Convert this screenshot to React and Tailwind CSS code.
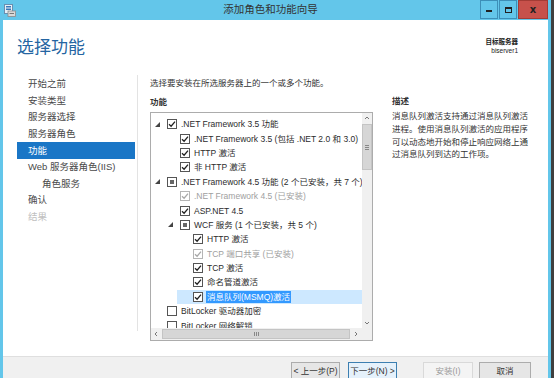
import React from 'react'

const rows = [
  { lv: 0, exp: true, st: 'on', t: '.NET Framework 3.5 功能' },
  { lv: 1, st: 'on', t: '.NET Framework 3.5 (包括 .NET 2.0 和 3.0)' },
  { lv: 1, st: 'on', t: 'HTTP 激活' },
  { lv: 1, st: 'on', t: '非 HTTP 激活' },
  { lv: 0, exp: true, st: 'part', t: '.NET Framework 4.5 功能 (2 个已安装，共 7 个)' },
  { lv: 1, st: 'dis', t: '.NET Framework 4.5 (已安装)' },
  { lv: 1, st: 'on', t: 'ASP.NET 4.5' },
  { lv: 1, exp: true, st: 'part', t: 'WCF 服务 (1 个已安装，共 5 个)' },
  { lv: 2, st: 'on', t: 'HTTP 激活' },
  { lv: 2, st: 'dis', t: 'TCP 端口共享 (已安装)' },
  { lv: 2, st: 'on', t: 'TCP 激活' },
  { lv: 2, st: 'on', t: '命名管道激活' },
  { lv: 2, st: 'on', t: '消息队列(MSMQ)激活', sel: true },
  { lv: 0, st: 'off', t: 'BitLocker 驱动器加密' },
  { lv: 0, st: 'off', t: 'BitLocker 网络解锁' },
]

const nav = [
  { t: '开始之前' },
  { t: '安装类型' },
  { t: '服务器选择' },
  { t: '服务器角色' },
  { t: '功能', active: true },
  { t: 'Web 服务器角色(IIS)' },
  { t: '角色服务', sub: true },
  { t: '确认' },
  { t: '结果', off: true },
]

const indent = ['pl-0', 'pl-[13px]', 'pl-[26px]']

function Check({ st }) {
  const dis = st === 'dis'
  return (
    <div className={`w-[10px] h-[10px] shrink-0 border bg-white flex items-center justify-center ${dis ? 'border-[#b5b5b5]' : 'border-[#555]'}`}>
      {(st === 'on' || dis) && (
        <svg width="8" height="8" viewBox="0 0 8 8">
          <path d="M1 4.2 L3.1 6.2 L7 1.6" fill="none" stroke={dis ? '#a8a8a8' : '#222'} strokeWidth="1.3" />
        </svg>
      )}
      {st === 'part' && <div className="w-[4px] h-[4px] bg-[#666]" />}
    </div>
  )
}

function Row({ r }) {
  return (
    <div className={`h-[14.4px] flex ${indent[r.lv]}`}>
      <div className={`flex-1 flex items-center pl-[2px] ${r.sel ? 'bg-[#cde8ff]' : ''}`}>
        <div className="w-[14px] shrink-0 flex items-center pl-[2px]">
          {r.exp && (
            <svg width="5" height="5" viewBox="0 0 5 5">
              <path d="M5 0 L5 5 L0 5 Z" fill="#444" />
            </svg>
          )}
        </div>
        <Check st={r.st} />
        <span
          className={`ml-[3px] px-[1px] whitespace-nowrap leading-[12px] ${
            r.sel ? 'bg-[#3399ff] text-white' : r.st === 'dis' ? 'text-[#a0a0a0]' : 'text-[#2b2b2b]'
          }`}
        >
          {r.t}
        </span>
      </div>
    </div>
  )
}

function Arrow({ d }) {
  return (
    <div className="w-[10px] h-[10px] shrink-0 flex items-center justify-center bg-[#f0f0f0]">
      <svg width="6" height="6" viewBox="0 0 6 6">
        <path d={d} fill="none" stroke="#777" strokeWidth="1" />
      </svg>
    </div>
  )
}

export default function App() {
  return (
    <div className="w-[554px] h-[378px] flex overflow-hidden font-['Liberation_Sans','Noto_Sans_CJK_SC',sans-serif]">
      <div className="w-[551px] h-full bg-[#63c6ea] flex flex-col px-[3px]">
        {/* title bar */}
        <div className="h-[20px] shrink-0 flex items-start relative">
          <div className="w-[14px] h-[20px] flex items-center">
            <svg width="12" height="13" viewBox="0 0 12 13" className="ml-[1px]">
              <rect x="0.5" y="0.5" width="8" height="9" fill="#e8f1f8" stroke="#6a8fb0" />
              <rect x="2" y="2" width="5" height="1.5" fill="#3b78b8" />
              <rect x="2" y="4.5" width="5" height="1.5" fill="#3b78b8" />
              <rect x="4" y="7" width="7.5" height="5.5" fill="#d9d9d9" stroke="#8a8a8a" strokeWidth="0.8" />
              <rect x="5.5" y="9" width="4.5" height="1" fill="#777" />
            </svg>
          </div>
          <div className="flex-1 h-[20px] flex items-center justify-center text-[10.5px] text-[#333] pl-[44px]">
            添加角色和功能向导
          </div>
          <div className="flex h-[19px] gap-[1px]">
            <div className="w-[18px] h-full border border-[#3d8fb8] flex items-end justify-center pb-[6px]">
              <div className="w-[6px] h-[2px] bg-[#222]" />
            </div>
            <div className="w-[18px] h-full border border-[#3d8fb8] flex items-center justify-center">
              <div className="w-[7px] h-[6px] border-[1.5px] border-t-[2.5px] border-[#222]" />
            </div>
            <div className="w-[30px] h-full bg-[#c7514b] border border-[#a33c36] flex items-center justify-center text-[10px] font-bold text-[#222] font-['DejaVu_Sans',sans-serif]">
              x
            </div>
          </div>
        </div>

        {/* window body */}
        <div className="flex-1 bg-white flex flex-col min-h-0">
          <div className="h-[55px] shrink-0 flex justify-between pl-[14px] pr-[30px]">
            <div className="pt-[17px] text-[17px] leading-[22px] text-[#2565a2]">选择功能</div>
            <div className="pt-[17px] flex flex-col items-end text-[6.5px] leading-[9px] text-[#222]">
              <span className="font-bold">目标服务器</span>
              <span>biserver1</span>
            </div>
          </div>

          <div className="h-[281px] shrink-0 flex">
            {/* left nav */}
            <div className="w-[135px] h-[256px] shrink-0 border-r border-[#e3e3e3] pl-[14px] pr-[2px] pt-[1px] text-[9.5px]">
              {nav.map((n) => (
                <div
                  key={n.t}
                  className={`h-[16.6px] flex items-center ${n.sub ? 'pl-[25px]' : 'pl-[11px]'} ${
                    n.active ? 'bg-[#1a76c6] text-white' : n.off ? 'text-[#c0c0c0]' : 'text-[#4a4a4a]'
                  }`}
                >
                  {n.t}
                </div>
              ))}
            </div>

            {/* features */}
            <div className="w-[223px] shrink-0 ml-[12px] flex flex-col text-[8.5px]">
              <div className="mt-[2px] h-[13px] leading-[13px] text-[#333] whitespace-nowrap">
                选择要安装在所选服务器上的一个或多个功能。
              </div>
              <div className="mt-[6px] h-[13px] leading-[13px] font-bold text-[#333]">功能</div>
              <div className="mt-[3px] h-[229px] border border-[#acacac] flex flex-col">
                <div className="flex-1 flex min-h-0">
                  <div className="flex-1 overflow-hidden pt-[4px]">
                    {rows.map((r, i) => (
                      <Row key={i} r={r} />
                    ))}
                  </div>
                  <div className="w-[10px] shrink-0 bg-[#f0f0f0] flex flex-col">
                    <Arrow d="M1 4 L3 2 L5 4" />
                    <div className="mt-[1px] h-[46px] bg-[#d6d6d6] border border-[#c4c4c4] flex items-center justify-center">
                      <div className="w-[4px] flex flex-col gap-[1px]">
                        <div className="h-[1px] bg-[#888]" />
                        <div className="h-[1px] bg-[#888]" />
                        <div className="h-[1px] bg-[#888]" />
                      </div>
                    </div>
                    <div className="flex-1" />
                    <Arrow d="M1 2 L3 4 L5 2" />
                  </div>
                </div>
                <div className="h-[12px] shrink-0 flex items-center bg-[#f0f0f0]">
                  <Arrow d="M4 1 L2 3 L4 5" />
                  <div className="ml-[1px] w-[188px] h-[10px] bg-[#d6d6d6] border border-[#c4c4c4] flex items-center justify-center">
                    <div className="h-[4px] flex gap-[1px]">
                      <div className="w-[1px] bg-[#888]" />
                      <div className="w-[1px] bg-[#888]" />
                      <div className="w-[1px] bg-[#888]" />
                    </div>
                  </div>
                  <div className="flex-1" />
                  <Arrow d="M2 1 L4 3 L2 5" />
                  <div className="w-[11px]" />
                </div>
              </div>
            </div>

            {/* description */}
            <div className="ml-[19px] w-[140px] text-[8.5px] text-[#333]">
              <div className="mt-[20px] h-[13px] leading-[13px] font-bold">描述</div>
              <div className="mt-[2px] leading-[12.8px] whitespace-nowrap">
                消息队列激活支持通过消息队列激活
                <br />
                进程。使用消息队列激活的应用程序
                <br />
                可以动态地开始和停止响应网络上通
                <br />
                过消息队列到达的工作项。
              </div>
            </div>
          </div>

          {/* footer */}
          <div className="flex-1 border-t border-[#dfdfdf] bg-[#f0f0f0] flex justify-end items-start pt-[5px] pr-[17px] text-[8.5px]">
            <div className="w-[49px] h-[18px] border border-[#acacac] bg-[#e6e6e6] flex items-center justify-center text-[#333]">
              &lt; 上一步(P)
            </div>
            <div className="ml-[8px] w-[49px] h-[18px] border border-[#3c7fb1] bg-[#e5f1fb] flex items-center justify-center text-[#333]">
              下一步(N) &gt;
            </div>
            <div className="ml-[26px] w-[50px] h-[18px] border border-[#d9d9d9] bg-[#f4f4f4] flex items-center justify-center text-[#9a9a9a]">
              安装(I)
            </div>
            <div className="ml-[6px] w-[52px] h-[18px] border border-[#acacac] bg-[#e6e6e6] flex items-center justify-center text-[#333]">
              取消
            </div>
          </div>
        </div>
      </div>
      <div className="w-[3px] h-full bg-[#3f3f3f]" />
    </div>
  )
}
